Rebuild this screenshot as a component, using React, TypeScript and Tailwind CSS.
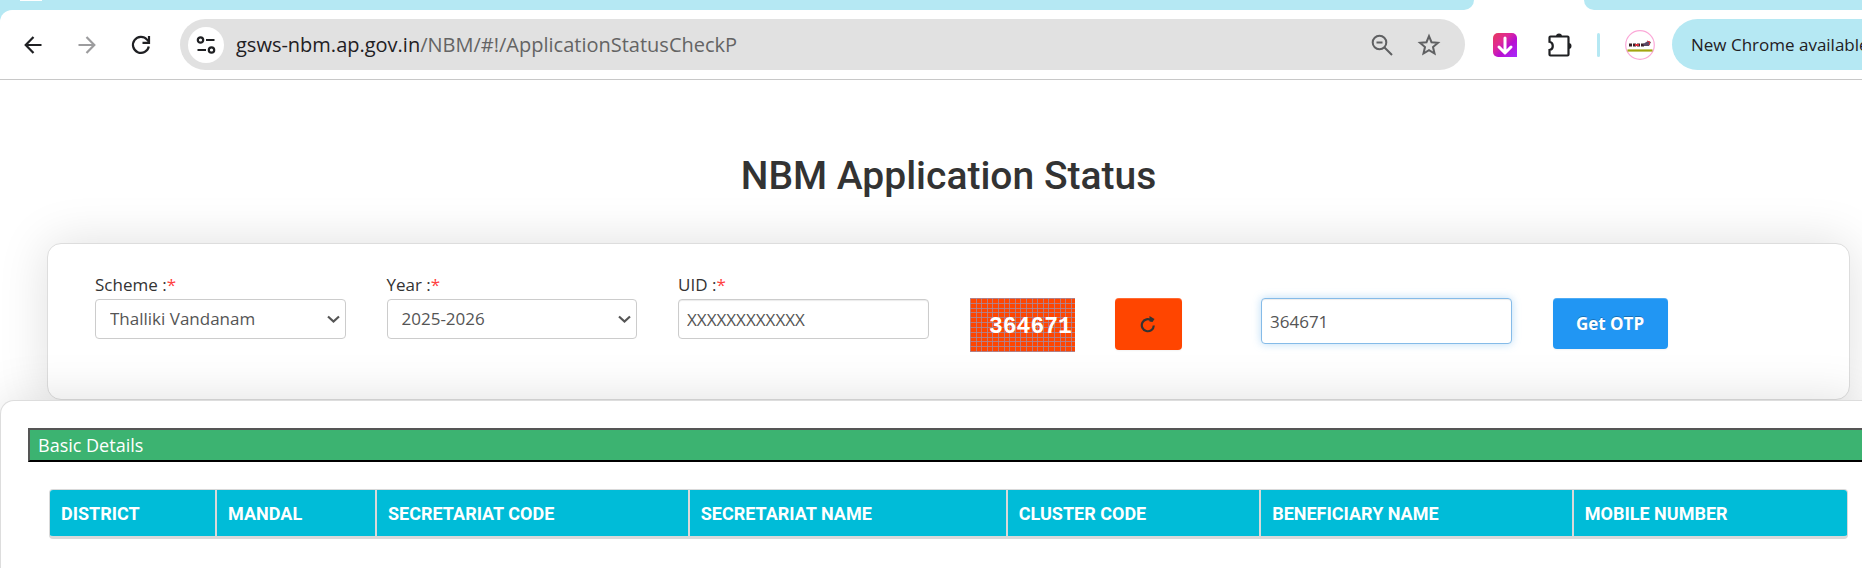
import React from 'react'

const columns = [
  { title: 'DISTRICT', width: 'w-[9.3%]' },
  { title: 'MANDAL', width: 'w-[8.9%]' },
  { title: 'SECRETARIAT CODE', width: 'w-[17.4%]' },
  { title: 'SECRETARIAT NAME', width: 'w-[17.7%]' },
  { title: 'CLUSTER CODE', width: 'w-[14.1%]' },
  { title: 'BENEFICIARY NAME', width: 'w-[17.4%]' },
  { title: 'MOBILE NUMBER', width: 'w-[15.2%]' },
]

const iconButton = 'flex items-center justify-center shrink-0 w-[54px] h-9'

const BackIcon = () => (
  <svg width="18" height="18" viewBox="0 0 18 18" fill="none" stroke="currentColor" strokeWidth="2.2">
    <path d="M17.5 9H2M9.5 1 1.7 9l7.8 8" />
  </svg>
)

const ForwardIcon = () => (
  <svg width="18" height="18" viewBox="0 0 18 18" fill="none" stroke="currentColor" strokeWidth="2.2">
    <path d="M.5 9H16M8.5 1l7.8 8-7.8 8" />
  </svg>
)

const ReloadIcon = () => (
  <svg width="20" height="20" viewBox="0 0 20 20" fill="none" stroke="currentColor" strokeWidth="2.2">
    <path d="M17.8 11.5A8 8 0 1 1 16 4.6L18 6.8" />
    <path d="M18 1v6.8h-6.5" />
  </svg>
)

const SiteInfoIcon = () => (
  <svg width="20" height="18" viewBox="0 0 20 18" fill="none" stroke="currentColor" strokeWidth="2.2">
    <circle cx="4.5" cy="4" r="2.7" />
    <path d="M10 4h8.5M1.5 14H10" />
    <circle cx="15.5" cy="14" r="2.7" />
  </svg>
)

const ZoomOutIcon = () => (
  <svg width="22" height="22" viewBox="0 0 22 22" fill="none" stroke="currentColor" strokeWidth="2">
    <circle cx="8.5" cy="8.5" r="6.8" />
    <path d="m13.5 13.5 7.5 7.5M5.5 8.5h6" />
  </svg>
)

const StarIcon = () => (
  <svg width="24" height="24" viewBox="0 0 24 24" fill="none" stroke="currentColor" strokeWidth="2">
    <path d="m12 3.2 2.5 6 6.5.6-5 4.3 1.5 6.4-5.5-3.4-5.5 3.4L8 14.1 3 9.8l6.5-.6z" />
  </svg>
)

const DownloaderIcon = () => (
  <svg width="24" height="24" viewBox="0 0 24 24" fill="none">
    <defs>
      <linearGradient id="downloader" x1="0" y1="0" x2="1" y2="1">
        <stop offset="0" stopColor="#e6395c" />
        <stop offset=".35" stopColor="#e02a95" />
        <stop offset=".6" stopColor="#b80fd0" />
        <stop offset="1" stopColor="#a62bff" />
      </linearGradient>
    </defs>
    <path d="M5 0h14a5 5 0 0 1 5 5v19H5a5 5 0 0 1-5-5V5a5 5 0 0 1 5-5z" fill="url(#downloader)" />
    <path d="M12 5v14.5M6 14l6 6 6-6" stroke="#fff" strokeWidth="3" strokeLinecap="round" strokeLinejoin="round" />
  </svg>
)

const ExtensionsIcon = () => (
  <svg width="26" height="26" viewBox="0 0 26 26">
    <path
      d="M3.5 4.5h17a1 1 0 0 1 1 1v17a1 1 0 0 1-1 1h-17a1 1 0 0 1-1-1V18a4.2 4.2 0 0 0 0-8.2V5.500a1 1 0 0 1 1-1z"
      fill="none"
      stroke="currentColor"
      strokeWidth="2.2"
    />
    <path d="M9 4.5a3 3 0 0 1 6 0zM21.5 11a3 3 0 0 1 0 6z" fill="currentColor" />
  </svg>
)

const ProfileIcon = () => (
  <svg width="30" height="30" viewBox="0 0 30 30">
    <circle cx="15" cy="15" r="14.3" fill="#fff" stroke="#fba9d8" strokeWidth="1.2" />
    <path d="M4 15h16" stroke="#3a2028" strokeWidth="3" strokeDasharray="3 1" />
    <path d="M10 15h4" stroke="#d6303c" strokeWidth="2" />
    <path d="m18 14 5-3 3 1-2 4h-5z" fill="#5b4a66" />
    <path d="m22 11 3 1-1 3" stroke="#d6303c" fill="none" />
    <path d="M2.5 20.5h25" stroke="#a3a510" strokeWidth="2.2" />
  </svg>
)

const ChevronIcon = () => (
  <svg
    className="absolute right-1.5 top-4 pointer-events-none"
    width="13"
    height="9"
    viewBox="0 0 13 9"
    fill="none"
    stroke="#555"
    strokeWidth="2.2"
  >
    <path d="m1 1.5 5.5 5 5.5-5" />
  </svg>
)

const RefreshIcon = () => (
  <svg width="16" height="17" viewBox="0 0 16 17">
    <path d="M13.8 9.5A6 6 0 1 1 11.5 4.5" fill="none" stroke="#333" strokeWidth="2.2" />
    <path d="M9.5 0 14.5 3 12.5 6l-3-.5z" fill="#333" />
  </svg>
)

const Captcha = () => (
  <svg width="105" height="54" viewBox="0 0 105 54" role="img" aria-label="364671">
    <defs>
      <pattern id="mesh" width="28" height="29" patternUnits="userSpaceOnUse">
        <path
          d="M.5 0v29M6.500 0v29M11.500 0v29M17.500 0v29M22.500 0v29M0 .5h28M0 5.500h28M0 10.500h28M0 14.500h28M0 19.500h28M0 24.500h28"
          stroke="#a58aa0"
          strokeWidth=".8"
        />
      </pattern>
    </defs>
    <rect width="105" height="54" fill="#ff4500" />
    <rect width="105" height="54" fill="url(#mesh)" />
    <text x="19" y="35" fill="#fff" className="font-['Liberation_Mono',monospace] text-[23px] font-bold">
      364671
    </text>
  </svg>
)

const BrowserBar: React.FC = () => {
  return (
    <header className="bg-[#b5e8f3] font-['Open_Sans',sans-serif]">
      <div className="flex h-[10px] bg-white">
        <div className="flex-1 pl-5 rounded-br-[10px] bg-[#b5e8f3]">
          <div className="w-[22px] h-px bg-white" />
        </div>
        <div className="w-[110px]" />
        <div className="w-[278px] rounded-bl-[10px] bg-[#b5e8f3]" />
      </div>
      <div className="flex items-center h-[70px] pl-[6px] bg-white rounded-tl-xl border-b border-[#c8c8c8] text-[#1f2023]">
        <button className={iconButton} aria-label="Back"><BackIcon /></button>
        <button className={`${iconButton} text-[#9c9c9e]`} aria-label="Forward"><ForwardIcon /></button>
        <button className={iconButton} aria-label="Reload"><ReloadIcon /></button>
        <div className="flex items-center flex-1 h-[51px] ml-3 pl-2 pr-6 rounded-full bg-[#e1e1e1]">
          <button className="flex items-center justify-center w-9 h-9 rounded-full bg-white" aria-label="Site information">
            <SiteInfoIcon />
          </button>
          <p className="flex-1 ml-3 text-[20px]">
            gsws-nbm.ap.gov.in<span className="text-[#646464]">/NBM/#!/ApplicationStatusCheckP</span>
          </p>
          <div className="flex items-center gap-6 text-[#5f6062]">
            <button aria-label="Zoom"><ZoomOutIcon /></button>
            <button aria-label="Bookmark this page"><StarIcon /></button>
          </div>
        </div>
        <div className="flex items-center ml-7">
          <button aria-label="Downloader"><DownloaderIcon /></button>
          <button className="ml-[30px]" aria-label="Extensions"><ExtensionsIcon /></button>
          <div className="w-[3px] h-6 ml-6 rounded bg-[#b5e8f3]" />
          <button className="ml-[25px]" aria-label="Profile"><ProfileIcon /></button>
        </div>
        <button className="h-[51px] w-[190px] ml-[17px] pl-[19px] overflow-hidden whitespace-nowrap text-left text-[17px] rounded-l-full bg-[#b5e8f3]">
          New Chrome available
        </button>
      </div>
    </header>
  )
}

interface FieldProps {
  id: string
  label: string
  children: React.ReactNode
}

const Field: React.FC<FieldProps> = ({ id, label, children }) => (
  <div className="pr-[41px]">
    <label htmlFor={id} className="block h-[27px] leading-[25px] text-[#333]">
      {label} :<span className="text-[#ff4040]">*</span>
    </label>
    {children}
  </div>
)

const selectClass = 'w-full h-10 px-[14px] appearance-none rounded border border-[#ccc] bg-white text-[#555]'
const cardShadow = 'shadow-[0_0_50px_rgba(0,0,0,0.13)]'

export default function App() {
  return (
    <div className="flex flex-col min-h-screen overflow-hidden bg-white text-[17px] font-['Open_Sans',sans-serif]">
      <BrowserBar />

      <main className="flex flex-col flex-1">
        <h1 className="ml-[47px] mr-3 pt-[72px] pb-[43px] text-center text-[39px] leading-[48px] font-medium text-[#333] font-['Roboto',sans-serif]">
          NBM Application Status
        </h1>

        <form
          className={`grid grid-cols-6 ml-[47px] mr-3 pt-7 pl-[47px] pr-[5px] pb-[47px] rounded-[14px] border border-[#ddd] bg-white ${cardShadow}`}
        >
          <Field id="scheme" label="Scheme">
            <div className="relative">
              <select id="scheme" className={selectClass}>
                <option>Thalliki Vandanam</option>
              </select>
              <ChevronIcon />
            </div>
          </Field>
          <Field id="year" label="Year">
            <div className="relative">
              <select id="year" className={selectClass}>
                <option>2025-2026</option>
              </select>
              <ChevronIcon />
            </div>
          </Field>
          <Field id="uid" label="UID">
            <input
              id="uid"
              defaultValue="XXXXXXXXXXXX"
              className="w-full h-10 px-2 rounded border border-[#ccc] bg-white text-[#555] shadow-[inset_0_1px_1px_rgba(0,0,0,0.08)]"
            />
          </Field>
          <div className="flex items-start gap-10 pt-[26px]">
            <Captcha />
            <button
              type="button"
              aria-label="Refresh captcha"
              className="flex items-center justify-center w-[67px] h-[52px] rounded bg-[#ff4500] shadow-[inset_0_1px_0_rgba(255,255,255,0.2),0_1px_2px_rgba(0,0,0,0.05)]"
            >
              <RefreshIcon />
            </button>
          </div>
          <div className="pt-[26px] pr-[41px]">
            <input
              aria-label="Captcha"
              defaultValue="364671"
              className="w-full h-[46px] px-2 rounded border border-[#85bbe8] bg-white text-[#555] outline-none shadow-[inset_0_1px_1px_rgba(0,0,0,0.075),0_0_8px_rgba(82,168,236,0.4)]"
            />
          </div>
          <div className="pt-[26px]">
            <button
              type="button"
              className="w-[115px] h-[51px] rounded bg-[#2196f3] text-white font-bold [text-shadow:0_-1px_0_rgba(0,0,0,0.25)] shadow-[inset_0_1px_0_rgba(255,255,255,0.2),0_1px_2px_rgba(0,0,0,0.05)]"
            >
              Get OTP
            </button>
          </div>
        </form>

        <section className={`flex-1 pt-[27px] rounded-tl-[14px] border-l border-t border-[#ddd] bg-white ${cardShadow}`}>
          <h2 className="ml-[27px] pl-2 leading-[30px] text-[18px] border-2 border-r-0 border-t-[#555] border-l-[#555] border-b-black bg-[#3cb371] text-white">
            Basic Details
          </h2>
          <div className="mt-[27px] ml-12 mr-[14px] rounded border border-b-[3px] border-[#d9d9d9] overflow-hidden">
            <table className="w-full table-fixed border-separate border-spacing-0 bg-[#00bcd8]">
              <thead>
                <tr>
                  {columns.map((col) => (
                    <th
                      key={col.title}
                      className={`${col.width} h-[46px] pl-[11px] text-left text-[18px] font-bold text-white border-r-2 border-[#d9d9d9] last:border-r-0 font-['Roboto',sans-serif]`}
                    >
                      {col.title}
                    </th>
                  ))}
                </tr>
              </thead>
            </table>
          </div>
        </section>
      </main>
    </div>
  )
}
